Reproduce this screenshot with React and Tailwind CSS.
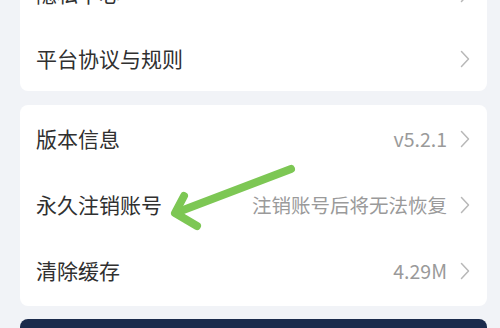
import React from "react";

const Chevron = () => (
  <svg width="10" height="18" viewBox="0 0 10 18" fill="none" className="shrink-0">
    <path d="M1.5 1.5 L8.5 9 L1.5 16.5" stroke="#b8b8b8" strokeWidth="1.5" strokeLinecap="round" strokeLinejoin="round" />
  </svg>
);

function Row({ label, value, h = "h-[66px]" }) {
  return (
    <div className={`flex items-center justify-between pl-4 pr-[17px] ${h}`}>
      <span className="text-[21px] text-[#303030]">{label}</span>
      <div className="flex items-center gap-[13px]">
        {value && <span className="text-[19.5px] text-[#9a9a9a]">{value}</span>}
        <Chevron />
      </div>
    </div>
  );
}

export default function App() {
  return (
    <div
      className="relative w-[500px] h-[328px] overflow-hidden bg-[#f1f3f7] pl-5 pr-[13px]"
      style={{ fontFamily: '"Noto Sans CJK SC", "Noto Sans", sans-serif' }}
    >
      <div className="-mt-[39px] bg-white rounded-b-lg">
        <Row label="隐私中心" h="h-[65px]" />
        <Row label="平台协议与规则" h="h-[65px]" />
      </div>

      <div className="mt-[14px] bg-white rounded-lg pt-px pb-[2px]">
        <Row label="版本信息" value="v5.2.1" />
        <Row label="永久注销账号" value="注销账号后将无法恢复" />
        <Row label="清除缓存" value="4.29M" />
      </div>

      <div className="mt-[13px] h-[40px] bg-[#1b2b4c] rounded-t-lg" />

      {/* green annotation arrow */}
      <svg className="absolute left-0 top-0 pointer-events-none" width="500" height="328" viewBox="0 0 500 328">
        <g stroke="#7dc754" strokeWidth="8" strokeLinecap="round" strokeLinejoin="round" fill="none">
          <path d="M291 169 L178 212" />
          <path d="M184 196 L175 213 L197 226" />
        </g>
      </svg>
    </div>
  );
}
